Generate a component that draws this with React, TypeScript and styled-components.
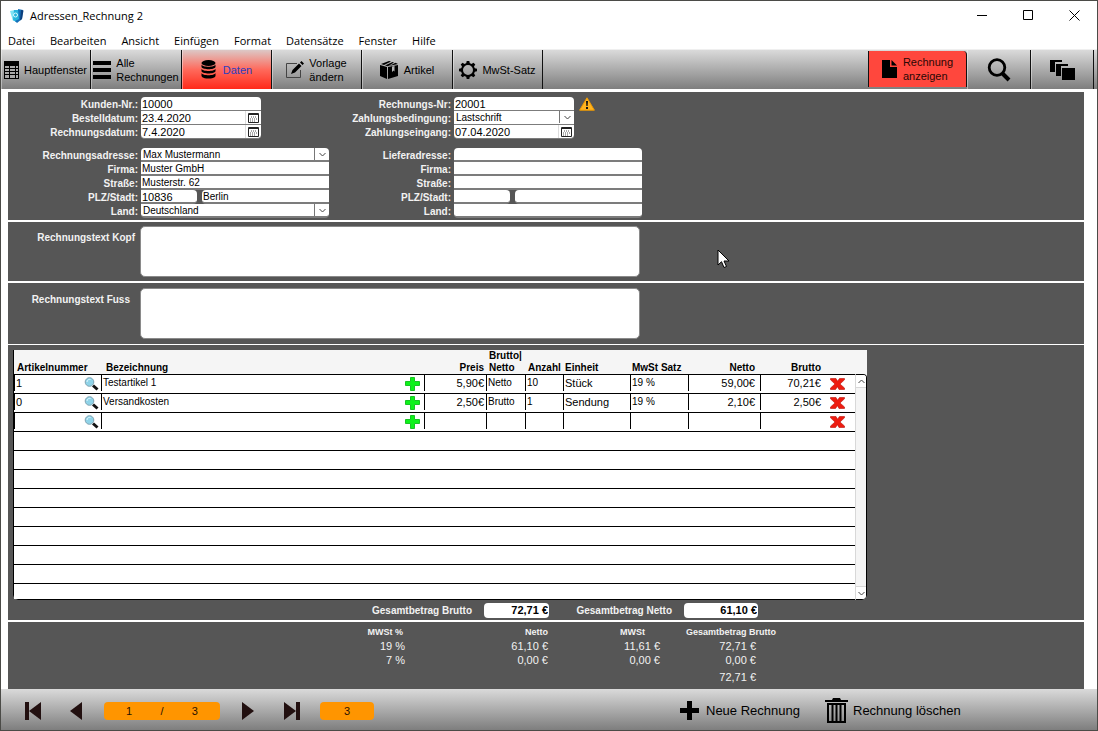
import React from "react";
import styled, { createGlobalStyle, css } from "styled-components";

const GlobalStyle = createGlobalStyle`
  *, *::before, *::after { box-sizing: border-box; }
  body { margin: 0; background: #fff; }
  button, input, select, textarea { font: inherit; color: inherit; margin: 0; }
  button { background: none; border: 0; padding: 0; cursor: pointer; }
`;

const ui = '"Liberation Sans", Arial, sans-serif';
const system = '"Open Sans", "Segoe UI", sans-serif';
const panelGrey = "#565656";
const chrome = "linear-gradient(#dadada, #7e7e7e)";

/* ---------- window ---------- */

const Window = styled.div`
  position: relative;
  display: flex;
  flex-direction: column;
  min-height: 100vh;
  border: 1px solid #4b4b47;
  background: #fff;
  color: #000;
  font-family: ${ui};
  font-size: 10px;
`;

const TitleBar = styled.header`
  display: flex;
  align-items: center;
  height: 29px;
  padding-left: 8px;
  font: 12px ${system};
`;

const Title = styled.h1`
  flex: 1;
  margin: 0 0 0 5px;
  font: inherit;
  font-size: 11px;
`;

const WindowButton = styled.button`
  display: grid;
  place-items: center;
  width: 46px;
  height: 28px;
`;

const MenuBar = styled.nav`
  display: flex;
  align-items: center;
  gap: 15px;
  height: 20px;
  padding: 2px 0 0 7px;
  border-bottom: 1px solid #efefef;
  font: 11px ${system};
`;

const MenuItem = styled.button`
  line-height: 18px;
`;

/* ---------- toolbar ---------- */

const Toolbar = styled.div`
  display: flex;
  height: 39px;
  background: ${chrome};
`;

const Tool = styled.button<{ $width: number; $active?: boolean; $gap?: number }>`
  display: flex;
  align-items: center;
  justify-content: center;
  gap: ${(p) => p.$gap ?? 5}px;
  width: ${(p) => p.$width}px;
  border-right: 1px solid #111;
  box-shadow: inset 1px 0 rgba(255, 255, 255, 0.4);
  font-size: 11px;
  line-height: 14px;
  text-align: left;
  white-space: nowrap;
  ${(p) =>
    p.$active &&
    css`
      background: linear-gradient(#dcc8c6, #ff6a5c 50%, #ff2a1a);
      color: #2b3fc0;
    `}
`;

const ShowInvoice = styled(Tool)`
  margin: 1px 0 2px auto;
  gap: 6px;
  border-left: 1px solid #111;
  border-radius: 0 4px 0 0;
  box-shadow: none;
  background: #ff473d;
  color: #2a0805;
`;

const ToolbarEnd = styled.div`
  width: 3px;
`;

/* ---------- panels ---------- */

const Content = styled.main`
  display: flex;
  flex-direction: column;
  flex: 1;
  gap: 2px;
  padding: 3px 13px 0 7px;
`;

const Panel = styled.section`
  background: ${panelGrey};
  color: #f2f2f2;
`;

const FormPanel = styled(Panel)`
  display: flex;
  padding: 5px 0 2px;
`;

const FormColumn = styled.div`
  display: flex;
  flex-direction: column;
  gap: 9px;
  width: 313px;
  flex: none;
`;

const BlockRow = styled.div`
  display: flex;
  align-items: flex-start;
  gap: 5px;
`;

const Block = styled.div<{ $fields: number; $line: number }>`
  display: grid;
  grid-template-columns: 130px ${(p) => p.$fields}px;
  grid-auto-rows: 14px;
  column-gap: 3px;
  --line: ${(p) => p.$line}px;
`;

const Label = styled.label`
  font-weight: bold;
  line-height: 16px;
  text-align: right;
  white-space: nowrap;
`;

type Edge = "top" | "bottom" | "none";

const radius = (edge: Edge) =>
  edge === "top" ? "4px 4px 0 0" : edge === "bottom" ? "0 0 4px 4px" : "0";

const Field = styled.div<{ $edge?: Edge }>`
  position: relative;
  display: flex;
  overflow: hidden;
  border-bottom: var(--line) solid #7c7c7c;
  border-radius: ${(p) => radius(p.$edge ?? "none")};
  background: #fff;
  color: #000;
`;

const TextInput = styled.input<{ $numeric?: boolean }>`
  flex: 1;
  width: 0;
  height: 14px;
  padding: 0 0 0 1px;
  border: 0;
  outline: 0;
  background: none;
  font-size: ${(p) => (p.$numeric ? 11 : 10)}px;
  line-height: 14px;
`;

const SelectInput = styled.select`
  appearance: none;
  width: 100%;
  height: 14px;
  padding: 0 16px 0 2px;
  border: 0;
  outline: 0;
  background: none;
  line-height: 14px;
`;

const SelectArrow = styled.span`
  position: absolute;
  top: 0;
  right: 0;
  display: grid;
  place-items: center;
  width: 15px;
  height: 12px;
  border-left: 1px solid #777;
  pointer-events: none;
`;

const CalendarButton = styled.button`
  display: grid;
  place-items: center;
  width: 16px;
  height: 13px;
  border-left: 1px solid #ddd;
`;

const CityRow = styled.div`
  display: grid;
  grid-template-columns: 56px 1fr;
  gap: 5px;
`;

const CityField = styled(Field)<{ $side: "left" | "right" }>`
  border-radius: ${(p) => (p.$side === "left" ? "0 4px 4px 0" : "4px 0 0 4px")};
`;

const TextPanel = styled(Panel)<{ $pad: number }>`
  display: flex;
  padding: ${(p) => p.$pad}px 0;
`;

const TextLabel = styled(Label)<{ $end: number }>`
  width: 132px;
  padding: 4px ${(p) => p.$end}px 0 0;
`;

const TextArea = styled.textarea`
  display: block;
  width: 500px;
  height: 51px;
  border: 1px solid #8a8a8a;
  border-radius: 5px;
  outline: 0;
  background: #fff;
  color: #000;
  resize: none;
`;

/* ---------- item list ---------- */

const ListPanel = styled(Panel)`
  margin-top: -1px;
  padding: 5px 0 0 5px;
`;

const ListBox = styled.div`
  display: flex;
  width: 854px;
  border-radius: 0 0 5px 5px;
  background: #f5f5f5;
  color: #000;
`;

const ItemTable = styled.table`
  table-layout: fixed;
  width: 842px;
  border-spacing: 0;
  border-bottom: 1px solid #000;
  border-left: 1px solid #000;
  border-radius: 0 0 0 5px;
`;

const ItemHead = styled.th<{ $right?: number; $left?: number }>`
  height: 24px;
  padding: 0 ${(p) => p.$right ?? 0}px 0 ${(p) => p.$left ?? 0}px;
  font-size: 10px;
  line-height: 12px;
  text-align: ${(p) => (p.$right ? "right" : "left")};
  vertical-align: bottom;
  white-space: nowrap;
`;

const ItemCell = styled.td<{ $short?: boolean }>`
  height: ${(p) => (p.$short ? 16 : 19)}px;
  padding: 0;
  border-top: 1px solid #000;
  background: #fff;
  vertical-align: top;
`;

const CellBody = styled.div<{ $ruled?: boolean; $end?: boolean; $size?: number; $pad?: number }>`
  display: flex;
  align-items: center;
  justify-content: ${(p) => (p.$end ? "flex-end" : "space-between")};
  height: 16px;
  padding: 0 ${(p) => p.$pad ?? 2}px 0 1px;
  border-left: ${(p) => (p.$ruled ? "1px solid #000" : "0")};
  font-size: ${(p) => p.$size ?? 10}px;
  line-height: 16px;
  white-space: nowrap;
`;

const IconButton = styled.button`
  display: grid;
  place-items: center;
  height: 18px;
  margin-top: 1px;
`;

const DeleteBody = styled(CellBody)`
  padding-left: 2px;
`;

const ScrollBar = styled.div`
  display: flex;
  flex-direction: column;
  justify-content: space-between;
  flex: 1;
  margin-top: 24px;
  border: 1px solid #000;
  border-left-color: #d8d8d8;
  border-radius: 0 4px 5px 0;
  overflow: hidden;
`;

const ScrollButton = styled.button`
  display: grid;
  place-items: center;
  height: 12px;
  background: #fff;
  box-shadow: 0 0 0 1px #d8d8d8;
`;

const Totals = styled.div`
  display: flex;
  align-items: center;
  height: 20px;
  font-weight: bold;
`;

const TotalLabel = styled.label<{ $width: number }>`
  width: ${(p) => p.$width}px;
  padding-right: 12px;
  text-align: right;
`;

const TotalValue = styled.input<{ $width: number }>`
  width: ${(p) => p.$width}px;
  height: 15px;
  padding: 0 1px 0 0;
  border: 0;
  border-radius: 4px;
  background: #fff;
  color: #000;
  font-size: 11px;
  font-weight: bold;
  text-align: right;
`;

/* ---------- tax summary ---------- */

const SumPanel = styled(Panel)`
  flex: 1;
  padding: 3px 0 4px;
`;

const SumTable = styled.table`
  table-layout: fixed;
  width: 770px;
  border-spacing: 0;
  line-height: 14px;
`;

const SumHead = styled.th<{ $right?: number }>`
  padding: 0 ${(p) => p.$right ?? 0}px 0 0;
  font-size: 9px;
  text-align: right;
  white-space: nowrap;
`;

const SumCell = styled.td<{ $right?: number; $tall?: boolean }>`
  padding: ${(p) => (p.$tall ? 3 : 0)}px ${(p) => p.$right ?? 0}px 0 0;
  font-size: 11px;
  text-align: right;
`;

/* ---------- footer ---------- */

const Footer = styled.footer`
  display: flex;
  align-items: center;
  height: 41px;
  padding: 2px 0 0 9px;
  background: ${chrome};
`;

const NavButton = styled.button`
  display: grid;
  place-items: center;
  width: 44px;
  height: 30px;
`;

const Pill = styled.div<{ $width: number }>`
  display: flex;
  align-items: center;
  justify-content: space-around;
  width: ${(p) => p.$width}px;
  height: 18px;
  margin: 0 6px;
  padding: 0 8px;
  border-radius: 4px;
  background: #ff9500;
  color: #2a1200;
  font-size: 11px;
`;

const Actions = styled.div`
  display: grid;
  grid-template-columns: 145px auto;
  margin-left: 300px;
`;

const Action = styled.button<{ $gap: number }>`
  display: flex;
  align-items: center;
  gap: ${(p) => p.$gap}px;
  font-size: 13px;
  white-space: nowrap;
`;

const Pointer = styled.svg`
  position: absolute;
  top: 248px;
  left: 716px;
  pointer-events: none;
`;

/* ---------- icons ---------- */

const AppIcon = () => (
  <svg width="16" height="16" viewBox="0 0 16 16" aria-hidden="true">
    <path d="M1 3 6 2v10l-2 1z" fill="#7fe3f4" />
    <path d="M5 2h6l1 9-5 3-3-2z" fill="#27b4dc" />
    <path d="M9 1l5 1-1 9-5 4-2-2 4-2z" fill="#1670b8" />
    <circle cx="6.500" cy="7" r="2" fill="none" stroke="#d8fbff" />
    <path d="M12 2l2.500.5L13 11l-2 1.500z" fill="#0c3f7c" />
  </svg>
);

const FormIcon = () => (
  <svg width="15" height="18" viewBox="0 0 15 18" aria-hidden="true">
    <path d="M0 0h15v18H0z" fill="#000" />
    <path d="M1 5h4v2H1zM6 5h5v2H6zM12 5h2v2h-2zM1 8h4v2H1zM6 8h5v2H6zM12 8h2v2h-2zM1 11h4v2H1zM6 11h5v2H6zM12 11h2v2h-2zM1 14h4v3H1zM6 14h5v3H6zM12 14h2v3h-2z" fill="#aaa" />
  </svg>
);

const BarsIcon = () => (
  <svg width="18" height="18" viewBox="0 0 18 18" aria-hidden="true">
    <path d="M0 0h18v4H0zM0 7h18v4H0zM0 14h18v4H0z" />
  </svg>
);

const DatabaseIcon = () => (
  <svg width="15" height="19" viewBox="0 0 15 19" aria-hidden="true">
    <ellipse cx="7.500" cy="3" rx="7" ry="3" />
    <path d="M.5 4.500c1 3 13 3 14 0V7c-1 3-13 3-14 0zM.5 8.700c1 3 13 3 14 0v2.500c-1 3-13 3-14 0zM.5 12.900c1 3 13 3 14 0v3c-1 3.500-13 3.500-14 0z" />
  </svg>
);

const EditIcon = () => (
  <svg width="18" height="18" viewBox="0 0 18 18" aria-hidden="true">
    <path d="M11 2.500H.5v14h14V9" fill="none" stroke="#444" />
    <path d="M5 13l1.500-4L13 2.500l2.500 2.500L9 11.500zM14 1.500 15.500 0 18 2.500 16.500 4z" />
  </svg>
);

const BoxIcon = () => (
  <svg width="19" height="18" viewBox="0 0 19 18" aria-hidden="true">
    <path d="M0 4l7 2v12l-7-3zM8 6l10-2v11L8 18zM1 3l8-3 2 .5-7 3.500zM5 4.500 12.500 1l1.500.4L8 5.200zM9 5l6.500-3.300L18 3z" />
    <path d="M12 5.500l2.500-.5v5.500l-1.200-1-1.300 1.700z" fill="#b5b5b5" />
  </svg>
);

const GearIcon = () => (
  <svg width="18" height="18" viewBox="0 0 18 18" aria-hidden="true">
    <circle cx="9" cy="9" r="6" fill="none" stroke="#000" strokeWidth="2" />
    {[0, 45, 90, 135, 180, 225, 270, 315].map((a) => (
      <path key={a} d="M7 3.200 7.700 0h2.600L11 3.200z" transform={`rotate(${a} 9 9)`} />
    ))}
  </svg>
);

const PageIcon = () => (
  <svg width="15" height="18" viewBox="0 0 15 18" aria-hidden="true">
    <path d="M0 0h8v7h7v11H0z" />
    <path d="M9.500 0 15 5.500H9.500z" />
  </svg>
);

const SearchIcon = () => (
  <svg width="24" height="24" viewBox="0 0 24 24" aria-hidden="true">
    <circle cx="10" cy="9.500" r="7.800" fill="none" stroke="#000" strokeWidth="2.800" />
    <path d="M15.500 15.500l6.500 6.500" stroke="#000" strokeWidth="4" />
  </svg>
);

const StackIcon = () => (
  <svg width="25" height="20" viewBox="0 0 25 20" aria-hidden="true">
    <path d="M0 0h12v2H5v10H0zM6 4h12v2h-7v10H6zM12 8h13v12H12z" />
  </svg>
);

const CalendarIcon = () => (
  <svg width="11" height="10" viewBox="0 0 11 10" aria-hidden="true">
    <path d="M.5.5h10v9H.5z" fill="#fff" stroke="#222" />
    <path d="M1 1.500h9" stroke="#222" />
    <path d="M3 4h6M2 6h7M2 8h5" stroke="#555" strokeDasharray="1 1" />
  </svg>
);

const Chevron = ({ up }: { up?: boolean }) => (
  <svg width="7" height="5" viewBox="0 0 7 5" aria-hidden="true">
    <path d={up ? "M.5 4l3-3 3 3" : "M.5 1l3 3 3-3"} fill="none" stroke="#444" />
  </svg>
);

const WarningIcon = () => (
  <svg width="16" height="14" viewBox="0 0 16 14" role="img" aria-label="Warnung">
    <path d="M8 .8 15.400 13.200H.6z" fill="#ffb41f" stroke="#f09a00" strokeLinejoin="round" />
    <path d="M7 4h2l-.4 5H7.400zM7 10h2v2H7z" fill="#111" />
  </svg>
);

const LensIcon = () => (
  <svg width="15" height="14" viewBox="0 0 15 14" aria-hidden="true">
    <path d="M9 8.500l4.500 4" stroke="#111" strokeWidth="3" />
    <circle cx="5.500" cy="5" r="4.300" fill="#8fd3e8" stroke="#7fa3b2" />
    <path d="M3 5c0-2 2-3 3.500-2.500" stroke="#e4f8ff" fill="none" />
  </svg>
);

const PlusIcon = () => (
  <svg width="15" height="14" viewBox="0 0 15 14" aria-hidden="true">
    <path d="M5.500.5h4v4h5v4h-5v5h-4v-5h-5v-4h5z" fill="#0df21a" stroke="#19c423" />
  </svg>
);

const DeleteIcon = () => (
  <svg width="15" height="12" viewBox="0 0 15 12" aria-hidden="true">
    <path d="M.5.5H6l1.500 2.700L9.500.5h5v1.300L10 6l4.500 4v1.500H9L7.500 8.700 5.500 11.500h-5V10L5 6 .5 1.800z" fill="#ee1c10" stroke="#b9120a" strokeWidth=".6" />
  </svg>
);

const ArrowIcon = ({ back, bar }: { back?: boolean; bar?: boolean }) => (
  <svg width={bar ? 17 : 12} height="18" viewBox={bar ? "0 0 17 18" : "0 0 12 18"} aria-hidden="true">
    <g fill="#221010" transform={back ? `translate(${bar ? 17 : 12} 0) scale(-1 1)` : undefined}>
      <path d="M0 0l12 9-12 9z" />
      {bar && <path d="M12 0h4v18h-4z" />}
    </g>
  </svg>
);

const AddIcon = () => (
  <svg width="19" height="19" viewBox="0 0 19 19" aria-hidden="true">
    <path d="M7 0h5v7h7v5h-7v7H7v-7H0V7h7z" />
  </svg>
);

const TrashIcon = () => (
  <svg width="23" height="25" viewBox="0 0 23 25" aria-hidden="true">
    <path d="M0 2h7l1-2h7l1 2h7v2H0z" />
    <path d="M3 6h17v18H3z" fill="none" stroke="#000" strokeWidth="2" />
    <path d="M7.500 6v18M11.500 6v18M15.500 6v18" stroke="#000" strokeWidth="2" />
  </svg>
);

/* ---------- form parts ---------- */

type PartProps = { id: string; label: string; value?: string; edge?: Edge; numeric?: boolean };

const TextRow = ({ id, label, value = "", edge, numeric }: PartProps) => (
  <>
    <Label htmlFor={id}>{label}</Label>
    <Field $edge={edge}>
      <TextInput id={id} defaultValue={value} $numeric={numeric} />
    </Field>
  </>
);

const DateRow = ({ id, label, value, edge }: PartProps) => (
  <>
    <Label htmlFor={id}>{label}</Label>
    <Field $edge={edge}>
      <TextInput id={id} defaultValue={value} $numeric />
      <CalendarButton type="button" aria-label="Kalender">
        <CalendarIcon />
      </CalendarButton>
    </Field>
  </>
);

const SelectRow = ({ id, label, value, edge }: PartProps) => (
  <>
    <Label htmlFor={id}>{label}</Label>
    <Field $edge={edge}>
      <SelectInput id={id} defaultValue={value}>
        <option>{value}</option>
      </SelectInput>
      <SelectArrow>
        <Chevron />
      </SelectArrow>
    </Field>
  </>
);

const CityFields = ({ id, zip = "", city = "" }: { id: string; zip?: string; city?: string }) => (
  <>
    <Label htmlFor={id}>PLZ/Stadt:</Label>
    <CityRow>
      <CityField $side="left">
        <TextInput id={id} defaultValue={zip} $numeric />
      </CityField>
      <CityField $side="right">
        <TextInput aria-label="Stadt" defaultValue={city} />
      </CityField>
    </CityRow>
  </>
);

/* ---------- data ---------- */

const menus = ["Datei", "Bearbeiten", "Ansicht", "Einfügen", "Format", "Datensätze", "Fenster", "Hilfe"];

const columns = [87, 323, 62, 39, 38, 67, 58, 72, 68, 27];

const items = [
  { nr: "1", name: "Testartikel 1", price: "5,90€", kind: "Netto", count: "10", unit: "Stück", tax: "19 %", net: "59,00€", gross: "70,21€" },
  { nr: "0", name: "Versandkosten", price: "2,50€", kind: "Brutto", count: "1", unit: "Sendung", tax: "19 %", net: "2,10€", gross: "2,50€" },
  { nr: "", name: "", price: "", kind: "", count: "", unit: "", tax: "", net: "", gross: "" },
];

const emptyRows = 9;

const taxes = [
  ["19 %", "61,10 €", "11,61 €", "72,71 €"],
  ["7 %", "0,00 €", "0,00 €", "0,00 €"],
];

export default function App() {
  return (
    <Window>
      <GlobalStyle />
      <TitleBar>
        <AppIcon />
        <Title>Adressen_Rechnung 2</Title>
        <WindowButton type="button" aria-label="Minimieren">
          <svg width="11" height="11" viewBox="0 0 11 11"><path d="M0 5.500h10" stroke="#000" /></svg>
        </WindowButton>
        <WindowButton type="button" aria-label="Maximieren">
          <svg width="11" height="11" viewBox="0 0 11 11"><path d="M.5.5h9v9h-9z" fill="none" stroke="#000" /></svg>
        </WindowButton>
        <WindowButton type="button" aria-label="Schließen">
          <svg width="11" height="11" viewBox="0 0 11 11"><path d="M.5.5l10 10M10.500.5l-10 10" stroke="#000" /></svg>
        </WindowButton>
      </TitleBar>
      <MenuBar>
        {menus.map((m) => (
          <MenuItem type="button" key={m}>{m}</MenuItem>
        ))}
      </MenuBar>
      <Toolbar>
        <Tool type="button" $width={90}><FormIcon />Hauptfenster</Tool>
        <Tool type="button" $width={91}><BarsIcon /><span>Alle<br />Rechnungen</span></Tool>
        <Tool type="button" $width={90} $gap={7} $active><DatabaseIcon />Daten</Tool>
        <Tool type="button" $width={90}><EditIcon /><span>Vorlage<br />ändern</span></Tool>
        <Tool type="button" $width={91}><BoxIcon />Artikel</Tool>
        <Tool type="button" $width={90}><GearIcon />MwSt-Satz</Tool>
        <ShowInvoice type="button" $width={99}><PageIcon /><span>Rechnung<br />anzeigen</span></ShowInvoice>
        <Tool type="button" $width={64} aria-label="Suchen"><SearchIcon /></Tool>
        <Tool type="button" $width={63} aria-label="Fenster"><StackIcon /></Tool>
        <ToolbarEnd />
      </Toolbar>

      <Content>
        <FormPanel>
          <FormColumn>
            <Block $fields={120} $line={1}>
              <TextRow id="kunde" label="Kunden-Nr.:" value="10000" edge="top" numeric />
              <DateRow id="bestellt" label="Bestelldatum:" value="23.4.2020" />
              <DateRow id="datum" label="Rechnungsdatum:" value="7.4.2020" edge="bottom" />
            </Block>
            <Block $fields={188} $line={2}>
              <SelectRow id="radresse" label="Rechnungsadresse:" value="Max Mustermann" edge="top" />
              <TextRow id="rfirma" label="Firma:" value="Muster GmbH" />
              <TextRow id="rstrasse" label="Straße:" value="Musterstr. 62" />
              <CityFields id="rplz" zip="10836" city="Berlin" />
              <SelectRow id="rland" label="Land:" value="Deutschland" edge="bottom" />
            </Block>
          </FormColumn>
          <FormColumn>
            <BlockRow>
              <Block $fields={120} $line={1}>
                <TextRow id="rnr" label="Rechnungs-Nr:" value="20001" edge="top" numeric />
                <SelectRow id="bedingung" label="Zahlungsbedingung:" value="Lastschrift" />
                <DateRow id="eingang" label="Zahlungseingang:" value="07.04.2020" edge="bottom" />
              </Block>
              <WarningIcon />
            </BlockRow>
            <Block $fields={188} $line={2}>
              <TextRow id="ladresse" label="Lieferadresse:" edge="top" />
              <TextRow id="lfirma" label="Firma:" />
              <TextRow id="lstrasse" label="Straße:" />
              <CityFields id="lplz" />
              <TextRow id="lland" label="Land:" edge="bottom" />
            </Block>
          </FormColumn>
        </FormPanel>

        <TextPanel $pad={4}>
          <TextLabel htmlFor="kopf" $end={5}>Rechnungstext Kopf</TextLabel>
          <TextArea id="kopf" />
        </TextPanel>

        <TextPanel $pad={5}>
          <TextLabel htmlFor="fuss" $end={10}>Rechnungstext Fuss</TextLabel>
          <TextArea id="fuss" />
        </TextPanel>

        <ListPanel>
          <ListBox>
            <ItemTable>
              <colgroup>
                {columns.map((w, i) => (
                  <col key={i} style={{ width: w }} />
                ))}
              </colgroup>
              <thead>
                <tr>
                  <ItemHead $left={3}>Artikelnummer</ItemHead>
                  <ItemHead $left={5}>Bezeichnung</ItemHead>
                  <ItemHead $right={2}>Preis</ItemHead>
                  <ItemHead $left={3}>Brutto|<br />Netto</ItemHead>
                  <ItemHead $left={3}>Anzahl</ItemHead>
                  <ItemHead $left={2}>Einheit</ItemHead>
                  <ItemHead $left={2}>MwSt Satz</ItemHead>
                  <ItemHead $right={5}>Netto</ItemHead>
                  <ItemHead $right={7}>Brutto</ItemHead>
                  <ItemHead aria-label="Löschen" />
                </tr>
              </thead>
              <tbody>
                {items.map((it, i) => (
                  <tr key={i}>
                    <ItemCell>
                      <CellBody $ruled $size={11}>
                        <span>{it.nr}</span>
                        <IconButton type="button" aria-label="Artikel suchen"><LensIcon /></IconButton>
                      </CellBody>
                    </ItemCell>
                    <ItemCell>
                      <CellBody $ruled $pad={4}>
                        <span>{it.name}</span>
                        <IconButton type="button" aria-label="Artikel hinzufügen"><PlusIcon /></IconButton>
                      </CellBody>
                    </ItemCell>
                    <ItemCell><CellBody $ruled $end $size={11}>{it.price}</CellBody></ItemCell>
                    <ItemCell><CellBody $ruled>{it.kind}</CellBody></ItemCell>
                    <ItemCell><CellBody $ruled>{it.count}</CellBody></ItemCell>
                    <ItemCell><CellBody $ruled $size={11}>{it.unit}</CellBody></ItemCell>
                    <ItemCell><CellBody $ruled>{it.tax}</CellBody></ItemCell>
                    <ItemCell><CellBody $ruled $end $size={11} $pad={5}>{it.net}</CellBody></ItemCell>
                    <ItemCell><CellBody $ruled $end $size={11} $pad={7}>{it.gross}</CellBody></ItemCell>
                    <ItemCell>
                      <DeleteBody>
                        <IconButton type="button" aria-label="Position löschen"><DeleteIcon /></IconButton>
                      </DeleteBody>
                    </ItemCell>
                  </tr>
                ))}
                {Array.from({ length: emptyRows }, (_, i) => (
                  <tr key={i}>
                    <ItemCell colSpan={10} $short={i === emptyRows - 1} />
                  </tr>
                ))}
              </tbody>
            </ItemTable>
            <ScrollBar>
              <ScrollButton type="button" aria-label="Nach oben"><Chevron up /></ScrollButton>
              <ScrollButton type="button" aria-label="Nach unten"><Chevron /></ScrollButton>
            </ScrollBar>
          </ListBox>
          <Totals>
            <TotalLabel htmlFor="brutto" $width={471}>Gesamtbetrag Brutto</TotalLabel>
            <TotalValue id="brutto" $width={65} readOnly value="72,71 €" />
            <TotalLabel htmlFor="netto" $width={135}>Gesamtbetrag Netto</TotalLabel>
            <TotalValue id="netto" $width={74} readOnly value="61,10 €" />
          </Totals>
        </ListPanel>

        <SumPanel>
          <SumTable>
            <colgroup>
              {[397, 143, 112, 118].map((w, i) => (
                <col key={i} style={{ width: w }} />
              ))}
            </colgroup>
            <thead>
              <tr>
                <SumHead $right={2}>MWSt %</SumHead>
                <SumHead>Netto</SumHead>
                <SumHead $right={15}>MWSt</SumHead>
                <SumHead $right={2}>Gesamtbetrag Brutto</SumHead>
              </tr>
            </thead>
            <tbody>
              {taxes.map((row) => (
                <tr key={row[0]}>
                  {row.map((v, i) => (
                    <SumCell key={i} $right={i === 3 ? 22 : 0}>{v}</SumCell>
                  ))}
                </tr>
              ))}
              <tr>
                <SumCell colSpan={4} $right={22} $tall>72,71 €</SumCell>
              </tr>
            </tbody>
          </SumTable>
        </SumPanel>
      </Content>

      <Footer>
        <NavButton type="button" aria-label="Erster Datensatz"><ArrowIcon back bar /></NavButton>
        <NavButton type="button" aria-label="Vorheriger Datensatz"><ArrowIcon back /></NavButton>
        <Pill $width={116}><span>1</span><span>/</span><span>3</span></Pill>
        <NavButton type="button" aria-label="Nächster Datensatz"><ArrowIcon /></NavButton>
        <NavButton type="button" aria-label="Letzter Datensatz"><ArrowIcon bar /></NavButton>
        <Pill $width={54}><span>3</span></Pill>
        <Actions>
          <Action type="button" $gap={7}><AddIcon />Neue Rechnung</Action>
          <Action type="button" $gap={5}><TrashIcon />Rechnung löschen</Action>
        </Actions>
      </Footer>

      <Pointer width="13" height="20" viewBox="0 0 13 20" aria-hidden="true">
        <path d="M1 1v15l3.500-3.300L7 18.500l2.500-1L7 12h5z" fill="#fff" stroke="#000" />
      </Pointer>
    </Window>
  );
}
